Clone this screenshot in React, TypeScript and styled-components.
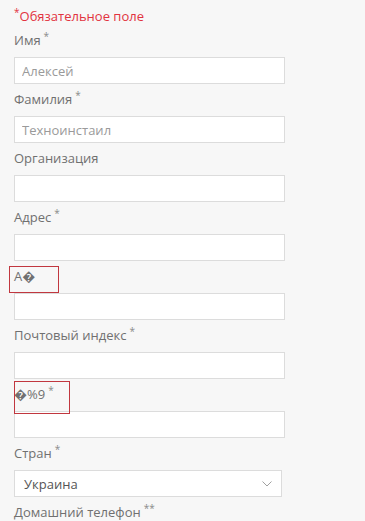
import React from 'react'
import styled, { createGlobalStyle } from 'styled-components'

const GlobalStyle = createGlobalStyle`
  html, body {
    margin: 0;
    padding: 0;
    background: #f7f7f7;
  }
  body {
    font-family: 'Open Sans', 'DejaVu Sans', sans-serif;
  }
`

const Form = styled.div`
  padding: 7px 0 0 14px;
  width: 271px;
`

const Required = styled.div`
  color: #e2333f;
  font-size: 13px;
  line-height: 18px;
  margin-bottom: 6px;
`

const Star = styled.sup<{ $red?: boolean }>`
  color: ${(p) => (p.$red ? '#e2333f' : '#8a8a8a')};
  font-size: 10px;
  line-height: 0;
  vertical-align: 5px;
  margin-left: ${(p) => (p.$red ? '0' : '3px')};
`

const Field = styled.div`
  margin-bottom: 6px;
`

const Label = styled.div`
  position: relative;
  color: #707070;
  font-size: 13px;
  line-height: 18px;
  margin-bottom: 8px;
`

// red annotation frame drawn over a label
const Mark = styled.span<{ $top: number; $left: number; $w: number; $h: number }>`
  position: absolute;
  top: ${(p) => p.$top}px;
  left: ${(p) => p.$left}px;
  width: ${(p) => p.$w}px;
  height: ${(p) => p.$h}px;
  border: 1px solid #c1373f;
  box-sizing: border-box;
`

const Input = styled.input`
  display: block;
  box-sizing: border-box;
  width: 271px;
  height: 27px;
  margin: 0;
  padding: 0 7px;
  border: 1px solid #dcdcdc;
  background: #fff;
  font-family: 'Open Sans', sans-serif;
  font-size: 13px;
  color: #555;
  outline: none;
  &::placeholder {
    color: #9a9a9a;
  }
`

const Select = styled.div`
  display: flex;
  align-items: center;
  justify-content: space-between;
  box-sizing: border-box;
  width: 268px;
  height: 27px;
  padding: 0 9px 0 9px;
  border: 1px solid #dcdcdc;
  background: #fff;
  font-size: 13px;
  color: #555;
`

const Chevron = () => (
  <svg width="10" height="6" viewBox="0 0 10 6">
    <path d="M0.5 0.5 L5 5 L9.5 0.5" fill="none" stroke="#a0a0a0" strokeWidth="1" />
  </svg>
)

const App: React.FC = () => {
  return (
    <>
      <GlobalStyle />
      <Form>
        <Required>
          <Star $red>*</Star>Обязательное поле
        </Required>

        <Field>
          <Label>
            Имя<Star>*</Star>
          </Label>
          <Input placeholder="Алексей" />
        </Field>

        <Field>
          <Label>
            Фамилия<Star>*</Star>
          </Label>
          <Input placeholder="Техноинстаил" />
        </Field>

        <Field>
          <Label>Организация</Label>
          <Input />
        </Field>

        <Field>
          <Label>
            Адрес<Star>*</Star>
          </Label>
          <Input />
        </Field>

        <Field>
          <Label>
            А{'\uFFFD'}
            <Mark $top={-1} $left={-5} $w={50} $h={27} />
          </Label>
          <Input />
        </Field>

        <Field>
          <Label>
            Почтовый индекс<Star>*</Star>
          </Label>
          <Input />
        </Field>

        <Field>
          <Label>
            {'\uFFFD'}%9<Star>*</Star>
            <Mark $top={-4} $left={0} $w={56} $h={33} />
          </Label>
          <Input />
        </Field>

        <Field>
          <Label>
            Стран<Star>*</Star>
          </Label>
          <Select>
            <span>Украина</span>
            <Chevron />
          </Select>
        </Field>

        <Field>
          <Label>
            Домашний телефон<Star>**</Star>
          </Label>
        </Field>
      </Form>
    </>
  )
}

export default App
